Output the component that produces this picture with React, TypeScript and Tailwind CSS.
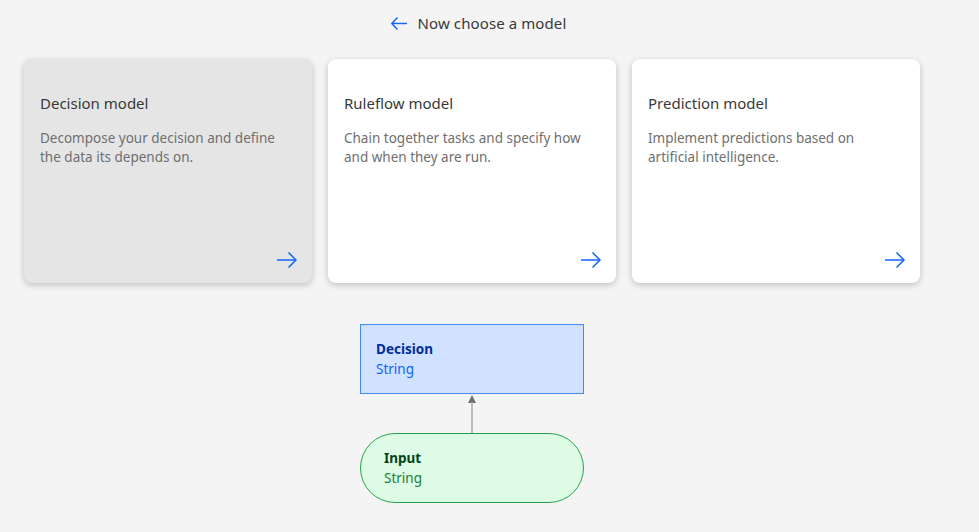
const models = [
  {
    title: 'Decision model',
    text: 'Decompose your decision and define the data its depends on.',
    active: true,
  },
  {
    title: 'Ruleflow model',
    text: 'Chain together tasks and specify how and when they are run.',
    active: false,
  },
  {
    title: 'Prediction model',
    text: 'Implement predictions based on artificial intelligence.',
    active: false,
  },
]

function Arrow() {
  return (
    <svg width="20" height="16" viewBox="0 0 20 16" fill="none" stroke="#0f62fe" strokeWidth="1.5">
      <path d="M0 8h19" />
      <path d="M11.5 0.5L19 8l-7.5 7.5" />
    </svg>
  )
}

export default function App() {
  return (
    <div
      className="min-h-screen w-full bg-[#f4f4f4] flex flex-col"
      style={{ fontFamily: '"Noto Sans", "Open Sans", sans-serif' }}
    >
      {/* header */}
      <div className="h-[46px] flex items-center justify-center gap-[11px] text-[#393939] pr-[22px]">
        <div className="w-4 h-[13px] flex items-center">
          <svg width="16" height="13" viewBox="0 0 16 13" fill="none" stroke="#0f62fe" strokeWidth="1.4">
            <path d="M16 6.5H1" />
            <path d="M6.5 0.5L0.8 6.5l5.7 6" />
          </svg>
        </div>
        <span className="text-[15px] tracking-[0.1px]">Now choose a model</span>
      </div>

      {/* model cards */}
      <div className="flex gap-4 px-6 mt-[13px]">
        {models.map((m) => (
          <div
            key={m.title}
            className={`w-[288px] h-[224px] rounded-lg shadow-[0_2px_6px_rgba(0,0,0,0.22)] flex flex-col pl-4 pr-[15px] pt-8 pb-[15px] ${
              m.active ? 'bg-[#e5e5e5]' : 'bg-white'
            }`}
          >
            <div className="text-[15px] leading-6 text-[#393939]">{m.title}</div>
            <div className="mt-[14px] text-[13.5px] leading-[19px] text-[#6f6f6f] pr-2">{m.text}</div>
            <div className="mt-auto flex justify-end">
              <Arrow />
            </div>
          </div>
        ))}
      </div>

      {/* diagram */}
      <div className="w-[896px] ml-6 flex flex-col items-center mt-[41px]">
        <div className="w-[224px] h-[70px] border border-[#4589ff] bg-[#d0e2ff] px-[15px] pt-[14px]">
          <div className="text-[13.5px] leading-5 font-bold text-[#002d9c]">Decision</div>
          <div className="text-[13.5px] leading-5 text-[#0f62fe]">String</div>
        </div>
        <svg width="10" height="39" viewBox="0 0 10 39" className="block">
          <polygon points="5,1 1,9 9,9" fill="#6f6f6f" />
          <line x1="5" y1="8" x2="5" y2="39" stroke="#a8a8a8" strokeWidth="1.5" />
        </svg>
        <div className="w-[224px] h-[70px] border border-[#24a148] bg-[#defbe6] rounded-full px-[23px] pt-[14px]">
          <div className="text-[13.5px] leading-5 font-bold text-[#044317]">Input</div>
          <div className="text-[13.5px] leading-5 text-[#198038]">String</div>
        </div>
      </div>
    </div>
  )
}
